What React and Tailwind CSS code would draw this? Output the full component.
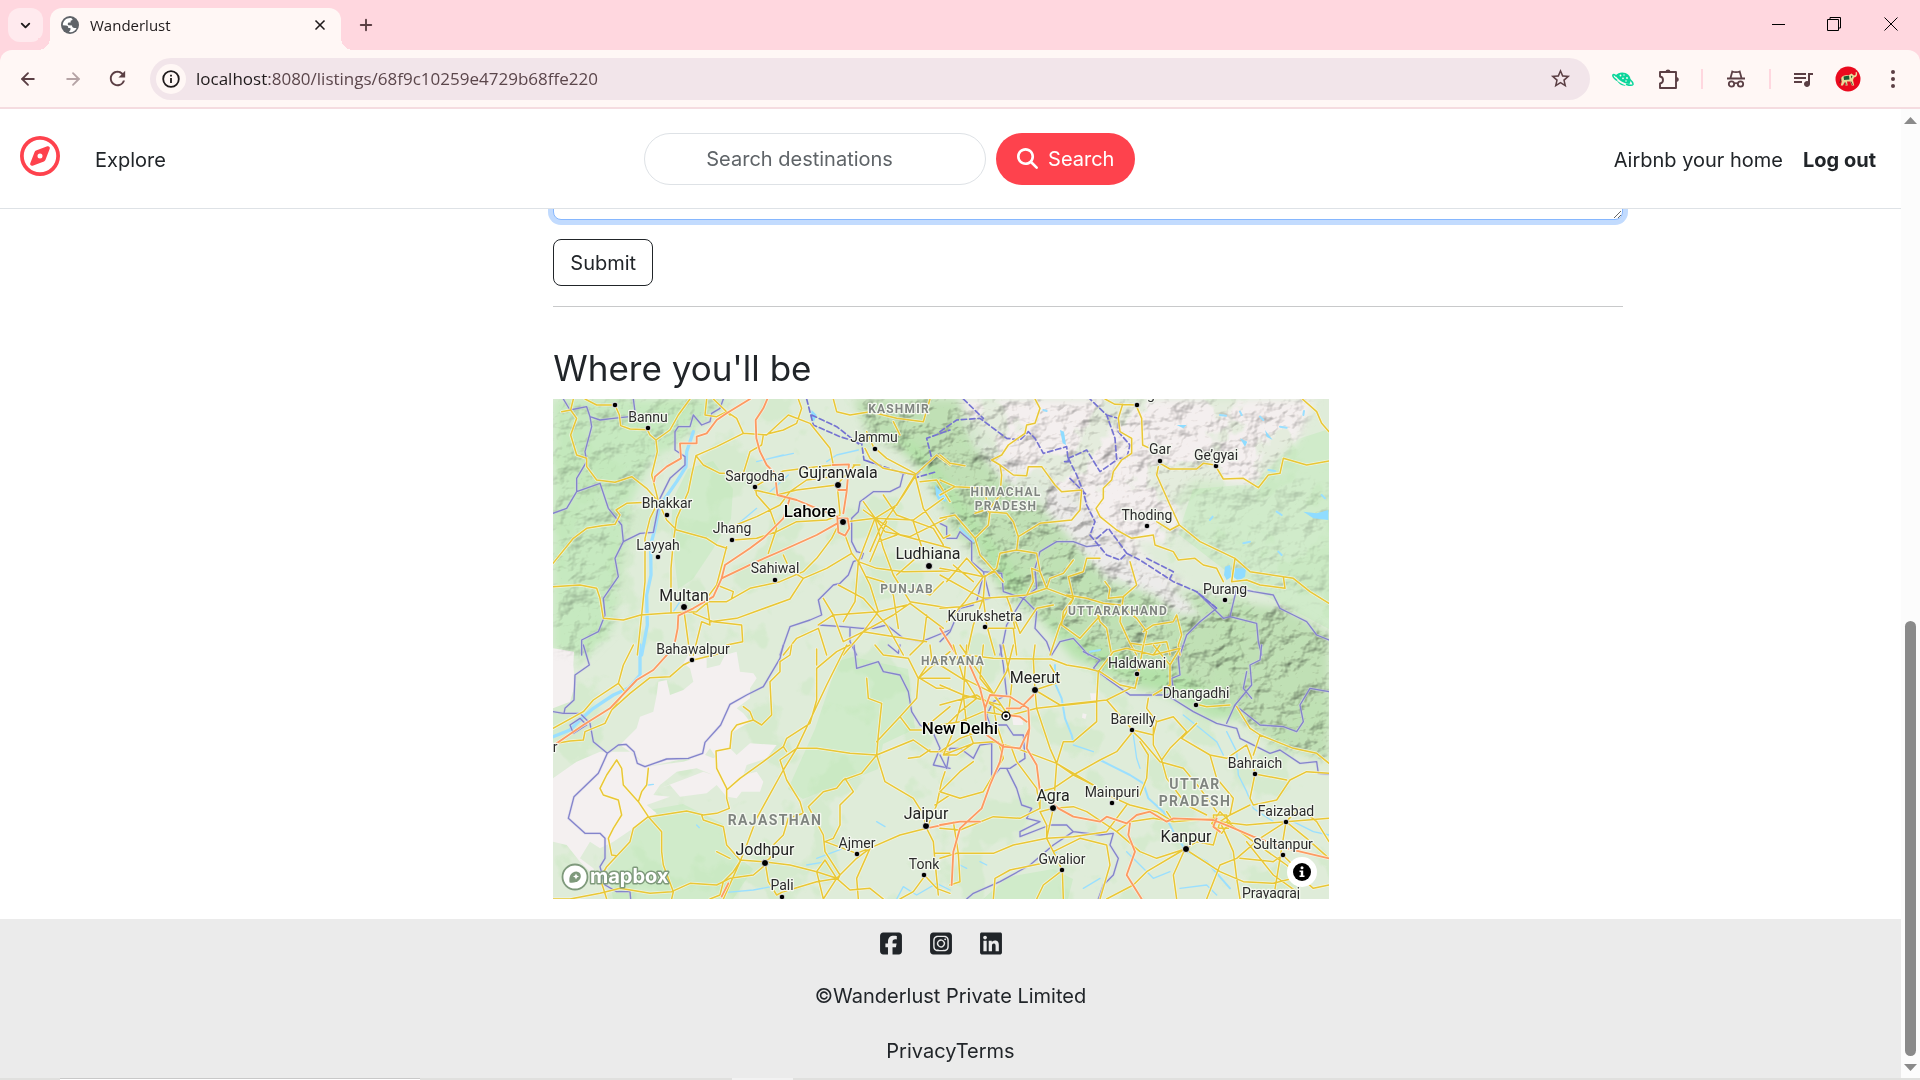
import React from "react";
import { ArrowLeft, ArrowRight, ChevronDown, Plus, X } from "lucide-react";
import { FaRegCompass, FaMagnifyingGlass, FaSquareFacebook, FaSquareInstagram, FaLinkedin } from "react-icons/fa6";
import { MdStarBorder, MdRefresh, MdOutlineQueueMusic } from "react-icons/md";

/* ---------- browser icons ---------- */

function GlobeIcon() {
  return (
    <svg viewBox="0 0 20 20" className="size-[18px] shrink-0" aria-hidden="true">
      <circle cx="10" cy="10" r="10" fill="#5f6368" />
      <path d="M11 2.300C6.500 1.800 2 5 2 10.300L5.500 10.500C7.500 10.500 8.300 11.500 8 13.200L10.500 13.300V15.500L8.800 17.900C13 18.500 16 16.500 17.300 13.300L14.500 13.200C12.500 13 12.300 11.800 12.300 10.600L8.300 10.400C7.200 9.800 7.200 8 8.400 7.300L10.700 7.200V5.300L12.800 4.400C12.800 3.300 12 2.500 11 2.300Z" fill="#fff" />
    </svg>
  );
}

function InfoIcon() {
  return (
    <svg viewBox="0 0 18 18" className="size-[18px]" fill="none" stroke="currentColor" strokeWidth="1.800" aria-hidden="true">
      <circle cx="9" cy="9" r="7.800" />
      <path d="M9 8V13M9 4.800V6.600" />
    </svg>
  );
}

function PlanetIcon() {
  return (
    <svg viewBox="0 0 22 18" className="h-[18px] w-[22px]" aria-hidden="true">
      <path d="M4.500 6.500C3 4.500 1.500 4.300 1 5 .3 6.300 2.500 8.500 5 10.500M18 9.500C20.200 11.500 21.400 13.500 20.800 14.600 20 15.800 17 15.300 14 14.200" fill="none" stroke="#0bd69b" strokeWidth="1.600" />
      <path d="M3.500 5.500C6 2.500 10 1.700 13.500 3 17.500 4.500 19 8 18.500 11.500L17.500 14C12.500 13.500 6 10.500 3.500 5.500Z" fill="#0bd69b" />
      <path d="M4.500 9.800C6 13.500 10 16.200 14 15.600 10.500 14.500 7 12.500 4.500 9.800Z" fill="#0bd69b" />
      <g fill="#fff7f5"><circle cx="8.500" cy="5.500" r=".9" /><circle cx="12" cy="5" r=".7" /><circle cx="11" cy="8.300" r=".9" /><circle cx="15" cy="8" r=".9" /><circle cx="14" cy="11" r=".8" /></g>
    </svg>
  );
}

function PuzzleIcon() {
  return (
    <svg viewBox="0 0 22 22" className="size-[22px]" aria-hidden="true">
      <path d="M2 4H18V20H2V15.500C6 15 6 9 2 8.500Z" fill="none" stroke="#5b3f44" strokeWidth="1.900" strokeLinejoin="round" />
      <path d="M7.500 4C7.500 .7 12.500 .7 12.500 4ZM18 9C21.700 9 21.700 14 18 14Z" fill="#5b3f44" />
    </svg>
  );
}

function IncognitoIcon() {
  return (
    <svg viewBox="0 0 20 20" className="size-5" fill="none" stroke="#5b3f44" strokeWidth="1.800" aria-hidden="true">
      <path d="M1 9.500H19M4.500 9 6.300 2.500C8 3.300 12 3.300 13.700 2.500L15.500 9" />
      <circle cx="5.500" cy="15" r="2.700" />
      <circle cx="14.500" cy="15" r="2.700" />
      <path d="M8.200 14.700C9 14 11 14 11.800 14.700" />
    </svg>
  );
}

function ElephantAvatar() {
  return (
    <svg viewBox="0 0 26 26" className="size-[26px]" aria-hidden="true">
      <circle cx="13" cy="13" r="12.500" fill="#ea0a1e" />
      <path d="M6 12.500C7 9.500 10 8.800 14 9L16.500 7.500 19 9.500C20.500 9.500 21 8.500 20.500 6.500L21.800 6C22.800 9 21.500 11.300 19 11.500L18 14 19.200 19.500H16.800L15.200 15.500H12L12.700 19.500H10.500L9.500 16 8 19.500H5.800L6.800 15.500Z" fill="#eadb9a" />
      <path d="M8.500 10.500 14 9.500 14.500 13.500 9 14ZM16 9.500 17.500 10.500 16.200 12.500Z" fill="#155c34" />
      <path d="M6 12.500 4.800 17M10.500 16.500 11 19M16 15.500 17.500 19" stroke="#3a3020" strokeWidth=".8" fill="none" />
    </svg>
  );
}

function IconButton({ label, className, children }) {
  return (
    <button type="button" aria-label={label} className={"flex items-center justify-center shrink-0 " + className}>
      {children}
    </button>
  );
}

function TabStrip() {
  return (
    <div className="flex h-[50px] items-start bg-[#ffd7df] pl-2 pt-2">
      <IconButton label="Search tabs" className="h-[34px] w-[35px] rounded-xl bg-[#ffeaee] text-[#1f1a1b]">
        <ChevronDown size={15} strokeWidth={3} />
      </IconButton>
      <div className="relative ml-[7px] flex h-[42px] w-[291px] items-center rounded-t-xl bg-[#fff7f5] pl-[11px] pr-[11px] pb-2">
        <span className="absolute -left-3 bottom-0 size-3 bg-[radial-gradient(circle_at_0_0,#ffd7df_12px,#fff7f5_12px)]" />
        <span className="absolute -right-3 bottom-0 size-3 bg-[radial-gradient(circle_at_100%_0,#ffd7df_12px,#fff7f5_12px)]" />
        <GlobeIcon />
        <span className="ml-[11px] grow text-[15px] text-[#1f1a1b]">Wanderlust</span>
        <IconButton label="Close tab" className="size-5 text-[#1f1a1b]">
          <X size={16} strokeWidth={2.500} />
        </IconButton>
      </div>
      <IconButton label="New tab" className="ml-3 size-[26px] mt-1 text-[#5b3f44]">
        <Plus size={18} strokeWidth={2.500} />
      </IconButton>
      <div className="ml-auto flex text-black">
        <IconButton label="Minimize" className="h-8 w-14">
          <svg viewBox="0 0 13 13" className="size-[13px]" stroke="currentColor"><path d="M0 6.500H13" /></svg>
        </IconButton>
        <IconButton label="Restore" className="h-8 w-14">
          <svg viewBox="0 0 14 14" className="size-[14px]" fill="none" stroke="currentColor"><path d="M.5 2.500H11.500V13.500H.5ZM3 2.500V.5H13.500V11H11.500" /></svg>
        </IconButton>
        <IconButton label="Close window" className="h-8 w-[58px]">
          <svg viewBox="0 0 14 14" className="size-[14px]" stroke="currentColor"><path d="M.5 .5 13.500 13.500M13.500 .5 .5 13.500" /></svg>
        </IconButton>
      </div>
    </div>
  );
}

function Toolbar() {
  return (
    <div className="bg-[#ffd7df]">
      <div className="flex h-[59px] items-center rounded-t-xl border-b-2 border-[#f5dce0] bg-[#fff7f5] pl-[5px] pr-1 text-[#5b3f44]">
        <IconButton label="Back" className="w-[45px]"><ArrowLeft size={20} strokeWidth={2.200} /></IconButton>
        <IconButton label="Forward" className="w-[45px] text-[#b5a3a5]"><ArrowRight size={20} strokeWidth={2.200} /></IconButton>
        <IconButton label="Reload" className="w-[45px]"><MdRefresh size={23} /></IconButton>
        <div className="ml-2.5 flex h-[42px] min-w-0 grow items-center rounded-full bg-[#f2e5ea] pl-1.5 pr-[18px]">
          <IconButton label="View site information" className="size-[30px] rounded-full bg-[#fff7f5] text-[#1f1a1b]">
            <InfoIcon />
          </IconButton>
          <div className="ml-2.5 grow text-[17px] text-[#5b464b]"><span className="text-[#1f1a1b]">localhost</span>:8080/listings/68f9c10259e4729b68ffe220</div>
          <IconButton label="Bookmark this page" className="size-6"><MdStarBorder size={23} /></IconButton>
        </div>
        <IconButton label="Planet extension" className="ml-2.5 w-[46px]"><PlanetIcon /></IconButton>
        <IconButton label="Extensions" className="w-[46px]"><PuzzleIcon /></IconButton>
        <span className="mx-[9px] h-5 w-0.5 bg-[#ffd7df]" />
        <IconButton label="Incognito" className="w-12"><IncognitoIcon /></IconButton>
        <span className="mx-[9px] h-5 w-0.5 bg-[#ffd7df]" />
        <IconButton label="Media controls" className="w-[46px]"><MdOutlineQueueMusic size={24} /></IconButton>
        <IconButton label="Profile" className="w-11"><ElephantAvatar /></IconButton>
        <IconButton label="Menu" className="w-[46px]">
          <svg viewBox="0 0 4 18" className="h-[18px] w-1" fill="currentColor"><circle cx="2" cy="2" r="2" /><circle cx="2" cy="9" r="2" /><circle cx="2" cy="16" r="2" /></svg>
        </IconButton>
      </div>
    </div>
  );
}

/* ---------- map ---------- */

const TILES = [
  {
    origin: "translate(-3 -4) scale(.33333)",
    minor: [
      "M70 12 62 45 35 50M62 45 80 70 62 120 80 180 110 190 110 215 140 255 195 262 245 245 290 280 325 320",
      "M105 12 140 30 195 30 208 60 212 92 240 102 292 104 300 120 318 135 322 170 305 240 318 290 325 320 300 370 285 430 285 560 275 660 262 780",
      "M420 12 385 60 360 105 318 135",
      "M9 505 70 430 110 400 155 392 195 388 210 360 198 345 230 325 325 320",
      "M9 575 90 570 140 580 150 610 160 670 220 675 272 660 345 655 440 650 475 620 530 620 600 580 690 560 760 530 800 490 845 430 860 400",
      "M325 320 350 375 380 405 470 430 500 450 530 460",
      "M548 435 620 430 680 410 740 380 830 375 870 360",
      "M438 182 425 240 415 290 380 370 370 440 363 520 363 655",
      "M438 182 500 155 580 115 650 120 715 60 780 85 840 160 850 210 800 215 700 228 640 260 615 275 620 300 660 345 680 400 655 475",
      "M438 182 460 210 510 235 580 235 600 170 635 150 640 120 700 105 740 85 755 40 745 12",
      "M470 12 465 60 500 65 530 50 560 70 580 115M490 12 540 60",
      "M614 285 680 300 740 285 860 270 915 210M558 390 620 365 690 330 720 290 770 255 850 245",
      "M530 455 500 570 470 610 480 690M500 570 550 590 545 610M403 655 420 780M430 655 490 680 575 690 578 740 530 750",
      "M482 680 560 670 720 612 760 550 720 525 700 480M760 550 830 520 905 475",
      "M480 690 455 680 440 740 430 780M862 275 870 355M910 210 930 210",
      "M885 420 905 475 925 500 915 620 880 680M890 380 975 370 1090 375 1180 310M975 370 940 345M975 370 925 500 980 520 1060 530 1200 528M975 370 1040 330 1095 240",
      "M1095 240 1110 300 1120 340 1180 430 1200 420M1095 240 1000 220 960 190 945 160M1095 240 1160 180 1200 210M975 370 1050 420 1200 460M975 370 1000 460 1030 540 1080 620 1200 640M925 500 960 570 985 650 1070 630",
      "M805 690 850 660 985 650 940 710 880 780M865 570 940 610 1010 690 1060 780M940 710 1030 660 1080 625 1180 700M820 610 850 660 880 740 940 710 1000 720 1130 740",
      "M850 12 860 50 900 60 960 50 1040 70 1120 80 1140 12M950 110 970 155 1010 190 1095 235M1030 80 1050 120M1130 660 1120 740 1080 780M1040 540 1120 470 1090 380M985 440 1040 420M960 500 1010 380M1110 260 1160 255 1200 320",
      "M940 320 1005 410 1080 425 1190 370M1000 300 1040 360 1150 400 1180 450M950 545 1000 560 1030 600 1045 700M1095 245 1060 300 990 400 960 470M700 780 740 730 805 700 830 780M1090 580 1140 600 1180 560",
    ],
    major: [
      "M600 12 530 55 500 75 470 115 440 125 440 145 390 145 393 190 350 215 315 245 312 260",
      "M652 12 640 40 617 75 619 130 630 170 650 210 675 235 682 300 740 315 800 340 862 365",
      "M862 385 800 420 700 465 620 500 515 550 490 605 430 640 385 662 383 700 375 740",
      "M718 315 700 370 640 430 600 460 525 510 515 550",
      "M848 210 897 208 890 290 880 355M865 285H890M862 370 865 412 885 422 898 400 893 370Z",
    ],
    border: [
      "M40 12 60 45 110 35 120 65 150 75 190 70 240 65 255 50 250 12M120 65 125 95 105 170 110 200 80 250 80 290 50 340 9 355",
      "M80 290 150 265 165 310 175 340 215 390 220 440 270 415 310 412 330 310 360 250 405 210 405 185 375 165 375 110 385 95 420 95 430 60 455 90 480 80 485 55 510 40 520 12",
      "M220 440 195 490 205 545 160 610 165 660 145 710 95 735 95 780",
      "M1060 235 1050 275 1020 290 970 290 930 320 925 350 905 370 905 440 920 470 940 475 935 490 910 500 895 540 870 565 850 570 805 615 815 660 780 675 720 695 690 780",
      "M805 690 880 695 935 700 970 700 1010 690 1060 730 1115 740 1200 705M900 700 900 740 920 780",
    ],
    disputed: ["M770 12 790 90 870 125 935 145 942 195 1060 235 1100 240 1145 190 1130 130 1200 105M942 195 990 210M785 60 860 95 930 150M1090 250 1160 230"],
    water: ["M430 110 410 170 408 215 380 260 345 310 325 350 315 400 302 450 303 540 290 600 292 690 275 780", "M700 180 620 200M730 175 660 190M925 165 860 180 830 200M715 240 660 290M620 340 560 390M390 620 370 650"],
    lakes: ["M1155 270 1175 290 1190 320 1165 315 1158 300ZM785 45 800 60 792 80 782 65Z"],
  },
  {
    origin: "translate(387 -4) scale(.33333)",
    minor: [
      "M285 12 300 40 285 85 260 90 255 115 205 150 185 180 155 195 180 210 185 240 180 300 150 340 105 355M180 210 220 240 260 242 265 215 305 215 345 270 365 290 425 285 420 345 395 375 300 385 235 425 220 380 200 355 145 350",
      "M495 12 525 28 590 30M548 28 535 70 540 110 575 130 575 175 545 195 520 230 515 255 490 280 490 310 468 340 480 365 530 405 575 430 640 420 645 450 700 470 715 495 765 490 790 510 830 520 850 560",
      "M590 35 605 70 608 150 625 158M660 205 690 222 770 222 790 205 825 210 850 252 910 250 955 278 985 240 1020 235 1030 190 1100 210 1167 198M1087 12 1130 50 1145 85 1167 110",
      "M655 215 650 240 690 330 718 390 780 440 885 490 930 530 1060 550 1110 590 1167 625M718 390 690 405 650 380M885 490 875 560 920 555 960 570 1035 580 1030 545",
      "M0 180 30 205 75 212M0 255 45 275 130 280 150 350 145 390 105 430M0 300 45 275M0 370 45 360 105 430 120 480 165 530 190 560",
      "M220 380 235 425 230 465 180 475 170 520 135 545 130 610 140 690 165 780M230 465 290 475 300 530 320 580 400 610 360 690 330 780",
      "M320 580 330 550 370 535 400 495M400 610 385 545 430 530 440 490 480 490M380 600 440 610 490 625 540 630 590 670 620 710 610 750 570 745",
      "M570 500 590 570 550 605 540 680 570 745 590 780M495 560 510 580 505 610 550 605M400 610 370 650 365 690 420 730 500 640M470 650 480 680 500 700 515 780",
      "M610 750 680 740 690 780M610 710 640 690 700 680 710 660 725 720 715 750 720 780",
      "M0 520 60 530 130 545 165 530M0 540 90 590 130 610 200 605 260 600 320 580M0 640 60 635 130 615M80 490 130 545 75 620 20 680M80 490 20 560M100 560 40 510M130 610 100 690 80 780M135 700 220 700 230 780M200 605 240 715 290 640 340 630M210 630 225 700M260 600 280 560 275 520 300 530",
    ],
    major: ["M0 700 50 780"],
    border: [
      "M0 385 20 395 20 430 50 430 60 410 95 440 95 500 130 530 150 610 110 620 130 540",
      "M130 530 185 535 190 590 250 610 290 580 285 520 300 470 350 440 400 440 440 455 480 450",
      "M250 610 200 690 190 740 180 780M250 610 290 650 285 700 320 740 335 780 360 740 400 730 445 780M100 630 60 640 30 710 0 740",
      "M720 780 740 720 780 680 830 640 770 590 850 670 870 665 890 580 940 590 1000 600 1020 640 1060 660 1100 680 1130 720 1167 735M870 665 950 685 955 740 965 780",
    ],
    disputed: [
      "M0 110 50 75 120 70 200 130 240 135 265 110 285 130 310 175 380 155 385 200 370 200M70 12 130 70M385 190 440 165 480 230 530 195 525 130 500 60 450 12M500 60 535 70 535 110 570 150 560 190 530 190",
      "M385 190 410 240 430 290 440 330 465 380 450 420 500 480 540 495 560 475 600 495 700 560 770 590 830 640M390 250 440 300M470 430 505 400 535 440 560 475M620 490 700 530 690 550",
    ],
    water: ["M60 400 100 440M0 290 20 310M310 45 320 48M840 60 858 62M900 50 905 60M960 65 970 75M1020 95 1040 98M1010 350 1025 360M1015 470 1025 480M1090 60 1092 48M985 225 1005 228M1145 300 1155 310M910 445 930 440M810 375 818 365M450 770 480 765"],
    lakes: ["M360 105 372 110 378 150 368 145ZM855 515 870 510 875 545 860 555 852 540ZM885 520 918 520 915 545 895 558 880 545ZM975 105 998 135 980 125ZM900 130 922 140 915 155ZM1090 350 1130 355 1165 345 1165 375 1120 370ZM710 90 740 90 730 100Z"],
  },
  {
    origin: "translate(-3 246) scale(.33333)",
    minor: [
      "M250 0 220 60 205 115 130 165 100 200 9 250M205 115 225 140 185 195 165 235 105 260 100 285 60 288 20 295",
      "M530 20 430 45 400 60 360 95 300 98 240 145 185 195",
      "M725 0 720 30 690 50 690 80 660 110 665 210 635 240 610 225 560 240 545 260 540 310 498 318 500 370 530 430 530 460 538 490 500 505 460 510 410 498 300 515",
      "M580 185 600 200 610 225M200 345 215 370 220 420 265 470 295 515 335 560 335 620 340 660 370 740 365 762M295 370 290 420 275 440 265 470",
      "M200 345 170 390 150 430 160 450 205 465 215 510 190 550 175 580 185 630 200 632M295 515 250 550 240 590 170 665 150 700 160 730 170 762",
      "M530 435 570 400 640 350 700 305 710 280 780 235 800 165 800 70 860 20 900 0M800 12 800 60M890 0 830 120 740 310 700 375 620 520 590 600 570 650 520 762",
      "M740 310 800 310 900 325 980 330 1090 285 1140 320 1200 320M700 375 690 345 740 310M700 375 710 405 750 470 760 505 715 520 700 570 670 600 660 640 645 650",
      "M950 100 955 160 995 175 985 270 980 330 1005 410 1090 460 1115 500 1130 545M980 330 935 385 880 405 860 430 820 440 775 485 820 570 825 620 870 690 865 700",
      "M885 400 910 440 870 480 870 540 850 580 825 590 920 625 970 605 1050 570 1130 550M980 290 1050 215 1100 160 1105 100 1075 40 1000 30 975 0M1050 215 1080 255 1115 255 1200 185",
      "M1130 550 1160 480 1175 410 1185 380M1155 480 1200 450M1130 550 1150 590 1155 650 1165 750M1123 690 1160 730 1200 745M1155 625 1200 625M1123 695 1090 740 1050 762",
      "M455 510 460 525 520 545 530 600 570 645 640 650 720 660 800 680 860 700 920 640 960 610M570 650 550 680 520 710 510 750 480 762M645 650 655 710 680 750 700 740 800 710 865 700",
      "M9 762 60 762 150 745 210 730 300 745 365 740 420 715 500 720 540 700 610 690 640 665M800 680 825 645 860 700 900 735 960 730 1000 762M860 700 820 762M800 680 820 762M1105 100 1200 100M1105 100 1145 40 1140 0M1105 100 1145 65 1200 20M1110 100 1160 130 1200 130",
      "M925 762 920 700 960 610M700 305 710 320M1075 340 1110 335 1140 315M500 620 540 640",
    ],
    major: ["M355 25 310 75 260 105 180 190 100 240 20 295", "M1140 548 1200 535", "M535 715 515 755"],
    border: [
      "M700 0 690 40 640 125 590 150 540 178 512 240 465 292 458 325 415 340 350 342 285 365 262 355 252 320 228 298 205 300 172 325 145 385 72 455 55 520 105 565 150 565 165 580 165 640 150 665 165 720 200 740 240 740 242 762",
      "M172 325 130 290 120 235 90 205 40 205 9 200M100 0 118 60 75 90 72 165 45 190 42 205M60 240 90 220 110 240 70 265Z",
      "M912 0 920 70 985 50 1000 80 1050 90 1075 140 1085 200 1110 240 1150 265 1170 310 1150 360 1200 370M1015 0 1045 25 1050 0",
    ],
    disputed: [],
    water: ["M270 0 270 90 235 130 190 150 130 190 90 225 60 255 9 275", "M770 660 830 650M530 742 610 735 690 720M800 640 880 610M1040 762 1060 725 1100 750 1160 715 1200 735M980 530 1005 545M295 420 310 418M440 540 448 548"],
    wasteland: ["M9 10 72 20 70 60 75 120 60 170 9 190ZM420 20 470 40 470 70 510 60 525 30 560 20 570 80 610 85 620 100 600 130 600 160 560 190 580 205 600 230 550 260 540 310 500 340 480 310 465 330 440 350 410 340 290 365 255 330 210 300 260 250 270 215 310 200 320 150 325 110 350 105 360 150 400 135 430 110 420 70 400 55Z M9 400 80 350 150 320 240 320 290 365 400 350 465 330 490 340 540 310 560 330 600 295 680 300 650 340 590 360 580 390 620 380 640 410 630 440 575 440 560 460 530 455 500 420 470 445 390 455 360 420 330 430 410 400 460 380 490 390 440 370 380 380 330 420 310 450 360 455 290 480 320 505 250 550 190 590 150 610 120 590 90 640 130 670 140 700 90 650 50 600 9 590Z"],
  },
  {
    origin: "translate(387 246) scale(.33333)",
    minor: [
      "M0 50 80 30 160 40 280 42 333 42 380 60 440 70 480 80 540 120 585 130 595 90M285 135 280 42 285 0M285 135 360 110 330 60M285 135 360 180 500 165 570 130M285 135 290 190 330 310 350 355 340 490 320 580",
      "M205 212 290 190 470 170 475 80 520 20M470 170 470 230 400 290 370 290 350 355M205 212 150 130 60 0M180 180 110 160 70 150 0 120M205 212 110 150 0 180M205 212 215 120 190 0M205 212 130 200 60 230 0 240",
      "M180 175 120 100 130 0M110 160 60 200 20 240M160 150 200 80 220 0M70 150 40 260 10 330 100 295 160 290 230 310M10 330 50 330 100 295M0 320 60 280 170 240M175 290 190 340 130 440 60 460 0 440",
      "M80 0 70 150 80 240 100 295M40 0 70 100 150 140M0 60 80 110 110 160M100 350 60 380 0 440M160 180 170 240 190 300",
      "M230 310 350 355 400 390 460 420 480 440 570 480 650 500 700 530 680 500M350 355 460 420M400 390 480 345 530 320 578 260 600 280 660 350 730 370 780 430 830 500",
      "M578 255 640 270 650 230 700 215 740 260 690 310 665 345M625 160 620 190 650 230M600 290 625 330 620 400 600 450M665 345 680 400 740 480 800 510M500 165 530 200 578 255M725 280 810 330 830 400 880 460 870 510M725 280 770 235",
      "M810 330 860 340 920 300 935 340 945 387 930 460 940 480 1010 465 1050 405 1100 380 1167 385M945 387 1040 405M870 180 800 185 770 178M890 185 930 250 960 270 1060 310 1130 325 1167 355M960 270 940 330",
      "M585 130 595 85 610 0M640 0 690 60 690 120 640 150M660 0 640 30 560 10 520 20M690 60 720 10 640 30M300 490 240 520 160 515 60 555 0 550M300 490 290 430 230 350 215 310M300 490 300 440 340 430 400 390",
      "M340 490 400 485 440 500 530 560 570 530 640 520 700 530 820 520M340 490 300 500 320 540 320 580 340 620 367 676 310 720 290 762M320 580 400 575 500 560 560 480M530 560 600 620 650 640 735 612",
      "M320 580 220 600 160 625 50 625 0 640M55 625 60 710 30 720M40 530 55 625M367 676 370 762M160 762 165 700 210 675 330 650M340 620 420 580 500 600 510 660 480 762M735 612 700 690 710 762M735 612 620 680 580 720 500 762M735 612 840 680 910 710 1000 715 1060 700",
      "M840 530 820 600 770 590 735 612M840 530 880 620 890 700 900 762M860 530 940 590 1040 660 1120 730 1167 720M840 530 920 540 1038 530 1167 520M840 530 870 510 930 480M1038 530 1020 640 1000 762M1038 530 960 580 890 640 840 660 800 762M1038 530 1100 580 1167 640M1038 530 1080 490 1130 530 1167 590",
      "M820 510 860 510 865 550 825 550ZM840 500 870 530 845 565 815 535ZM640 240 640 300 665 345M900 640 1000 650 1028 630 1100 700M920 590 1000 690 1070 740",
    ],
    major: [
      "M80 40 120 130 135 190 150 150 210 155 265 190 268 250 240 310 190 305 140 270 135 190M268 250 260 310 290 360 300 440 355 490 400 515 480 530 500 515 560 535 590 510 630 500 680 530 700 520 820 525 870 545 940 575 1040 610 1167 640",
      "M190 300 180 350 150 420 125 490 60 550 40 620 35 720M0 540 60 530 120 530M570 535 565 570 585 620 560 690 605 762M200 210 240 215 260 230M200 190 240 190 280 150M840 560 820 545 830 520",
    ],
    border: [
      "M180 0 190 60 200 150 160 170 140 210 150 240 200 240 220 270 250 270 255 340 210 370 180 370 155 400 155 295 120 300 100 340 60 310 30 310 20 370 0 330M200 370 230 430 245 480 275 490 260 520 300 530 240 560 240 575 330 540 380 540 400 560 480 570 520 565 510 600 535 640 520 690 490 720 475 762",
      "M400 560 340 600 270 660 180 710 100 745 80 762M430 20 480 45 460 70 500 100 570 150 640 150 680 150 760 200 830 235 890 250 900 280 990 325 1020 315 1080 355 1130 350 1135 385 1167 388",
      "M730 0 715 40 720 90 695 100 700 130 680 155M965 0 960 45 930 60 935 120 885 180 860 235M920 80 910 130 935 160M885 180 960 240 1030 245 1070 260 1090 230 1080 180 1110 130 1167 140",
    ],
    disputed: [],
    water: ["M345 60 345 115 365 160 375 220 395 270 400 290M480 345 530 370 570 390 610 415 625 460 670 500 700 560 740 620 800 650 870 730", "M730 210 780 250 830 290 850 330M860 260 890 320 895 390 920 440 940 490 1000 530M1060 530 1120 560 1167 570M580 270 590 340 600 370M320 650 350 620M430 730 480 700M560 620 640 700 690 680M720 730 800 720 830 750M60 660 80 670M120 650 140 660M400 300 460 320"],
    wasteland: ["M450 145 470 145 472 170 455 170ZM215 210 245 215 250 240 220 240ZM428 205 440 208 436 222 426 218Z"],
  },
];

const CITIES = [
  ["Bannu", 95, 23, 95, 29], ["Sargodha", 202, 82, 202, 88], ["Jammu", 321, 43, 322, 50],
  ["Bhakkar", 114, 109, 114, 116], ["Jhang", 179, 134, 179, 141], ["Layyah", 105, 151, 105, 158],
  ["Sahiwal", 222, 174, 222, 181], ["Bahawalpur", 140, 255, 139, 261], ["Kurukshetra", 432, 222, 432, 228],
  ["Gar", 607, 55, 607, 62], ["Ge’gyai", 663, 61, 663, 67], ["Thoding", 594, 121, 594, 127],
  ["Purang", 672, 195, 672, 201], ["Haldwani", 584, 269, 584, 275], ["Dhangadhi", 643, 299, 643, 306],
  ["Bareilly", 580, 325, 579, 331], ["Bahraich", 702, 369, 702, 375], ["Mainpuri", 559, 398, 559, 404],
  ["Faizabad", 733, 417, 733, 423], ["Sultanpur", 730, 450, 730, 456], ["Gwalior", 509, 465, 509, 471],
  ["Ajmer", 304, 449, 304, 455], ["Tonk", 371, 470, 371, 476], ["Pali", 229, 491, 229, 498],
];
const BIG_CITIES = [
  ["Gujranwala", 285, 79, 285, 86], ["Ludhiana", 375, 160, 376, 167], ["Multan", 131, 202, 131, 208],
  ["Meerut", 482, 284, 482, 291], ["Agra", 500, 402, 500, 409], ["Kanpur", 633, 443, 633, 450],
  ["Jaipur", 373, 420, 373, 427], ["Jodhpur", 212, 456, 212, 464],
];
const REGIONS = [
  ["KASHMIR", 346, 14], ["HIMACHAL", 453, 97], ["PRADESH", 453, 111], ["PUNJAB", 354, 194],
  ["UTTARAKHAND", 565, 216], ["HARYANA", 400, 266],
];
const LARGE_REGIONS = [["UTTAR", 642, 390], ["PRADESH", 642, 407], ["RAJASTHAN", 222, 426]];

const HIMALAYA = "M300 0H405L425 30 455 62 500 90 530 100 540 135 575 165 620 190 680 203 735 210 776 235V362L720 345 690 320 640 290 590 292 545 270 525 240 480 215 455 200 430 165 405 135 385 100 372 75 345 50 315 35Z";
const TIBET = "M395 0H762L745 40 715 70 700 85 640 80 620 100 628 125 615 145 580 140 600 165 640 190 600 180 550 150 530 110 490 95 440 65 415 35Z";
const SULEIMAN = "M0 0H180L140 30 125 45 100 60 80 100 70 150 60 230 30 260 0 250Z";
const FARMLAND = "M135 70 160 62 180 90 178 120 160 150 140 180 125 190 118 130 120 100ZM285 262 300 258 355 270 362 330 330 345 325 370 250 400 235 390 262 330ZM90 412 130 405 170 425 175 450 200 470 180 500H60L55 470 75 445ZM430 500 455 478 500 470 520 480 515 500ZM640 90 700 85 745 40 776 30V230L690 185 625 135Z";

function RouteMap() {
  return (
    <svg viewBox="0 0 776 500" className="block size-full" role="img" aria-label="Map of northern India">
      <defs>
        <filter id="relief" x="0" y="0" width="100%" height="100%" colorInterpolationFilters="sRGB">
          <feTurbulence type="fractalNoise" baseFrequency=".04 .05" numOctaves="4" seed="8" />
          <feDiffuseLighting surfaceScale="5" diffuseConstant="1.300" lightingColor="#fffdfb">
            <feDistantLight azimuth="225" elevation="52" />
          </feDiffuseLighting>
        </filter>
        <filter id="soft" x="-5%" y="-5%" width="110%" height="110%"><feGaussianBlur stdDeviation="4" /></filter>
        <filter id="patches" x="0" y="0" width="100%" height="100%" colorInterpolationFilters="sRGB">
          <feTurbulence type="fractalNoise" baseFrequency=".02" numOctaves="4" seed="3" />
          <feColorMatrix values="0 0 0 0 .74  0 0 0 0 .9  0 0 0 0 .7  14 0 0 0 -7.800" />
        </filter>
        <mask id="hills">
          <g filter="url(#soft)" fill="#fff">
            <path d={HIMALAYA} /><path d={TIBET} opacity=".75" /><path d={SULEIMAN} opacity=".5" />
            <path d="M640 80H776V210L690 180 620 130Z" opacity=".4" />
          </g>
        </mask>
      </defs>
      <rect width="776" height="500" fill="#dfecd9" />
      <path d={FARMLAND} fill="#d0ebca" />
      <g filter="url(#soft)">
        <path d={SULEIMAN} fill="#c6e9c0" />
        <path d={TIBET} fill="#f4efef" />
        <path d={HIMALAYA} fill="#c0e0b5" />
        <path d="M405 10 425 50 450 80 480 100 510 130 540 165 560 185 600 195 625 215 650 215 620 190 600 165 560 140 530 105 490 80 440 50Z" fill="#ecebea" />
        <path d="M330 25 360 60 400 110 430 150 450 190 480 205 470 180 430 130 400 90 370 50ZM480 210 550 250 640 280 690 320 660 320 600 290 520 260Z" fill="#b0e2a6" opacity=".8" />
      </g>
      <rect width="776" height="500" filter="url(#patches)" opacity=".28" />
      {TILES.map((t, i) => t.wasteland && <path key={i} d={t.wasteland[0]} transform={t.origin} fill="#f4f0f0" />)}
      <g mask="url(#hills)" className="mix-blend-multiply"><rect width="776" height="500" filter="url(#relief)" opacity=".6" /></g>
      <g fill="none" strokeLinejoin="round" strokeLinecap="round">
        {TILES.map((t, i) => (
          <g key={i} transform={t.origin}>
            <path d={t.water[0]} stroke="#9adfff" strokeWidth={i < 1 || i === 2 ? 10 : 6} />
            {t.water[1] && <path d={t.water[1]} stroke="#9adfff" strokeWidth="4" />}
            {t.lakes && <path d={t.lakes[0]} fill="#8fdcff" />}
            <path d={t.border.join("")} stroke="#d3d0ea" strokeWidth="8" opacity=".5" />
            <path d={t.border.join("")} stroke="#8384cb" strokeWidth="4" />
            <path d={t.disputed.join("")} stroke="#7573d2" strokeWidth="5" strokeDasharray="16 9" />
          </g>
        ))}
        {TILES.map((t, i) => (
          <g key={i} transform={t.origin}>
            <path d={t.minor.join("")} stroke="#fbf8e6" strokeWidth="9" opacity=".7" />
            <path d={t.minor.join("")} stroke="#e9c735" strokeWidth="4.500" />
            <path d={t.major.join("")} stroke="#fff3e6" strokeWidth="10" opacity=".7" />
            <path d={t.major.join("")} stroke="#fd9a62" strokeWidth="5.500" />
          </g>
        ))}
      </g>
      <g fill="#000" stroke="#fff" strokeWidth=".8">
        {CITIES.map(([n, , , x, y]) => <circle key={n} cx={x} cy={y} r="2.800" />)}
        {BIG_CITIES.map(([n, , , x, y]) => <circle key={n} cx={x} cy={y} r="3.500" />)}
        <circle cx="290" cy="123" r="3.500" /><circle cx="62" cy="6" r="2.800" /><circle cx="584" cy="6" r="2.800" />
      </g>
      <circle cx="453" cy="317" r="4" fill="#fff" stroke="#000" strokeWidth="1.300" /><circle cx="453" cy="317" r="1.800" />
      <g textAnchor="middle" stroke="#f4f8f0" strokeWidth="2.500" strokeLinejoin="round" paintOrder="stroke" className="font-['Roboto',sans-serif] font-normal">
        <g fill="#808580" className="text-[12px] font-bold tracking-widest">
          {REGIONS.map(([n, x, y]) => <text key={n + y} x={x} y={y}>{n}</text>)}
        </g>
        <g fill="#808580" className="text-[14px] font-bold tracking-widest">
          {LARGE_REGIONS.map(([n, x, y]) => <text key={n} x={x} y={y}>{n}</text>)}
        </g>
        <g fill="#2b2b2b" className="text-[14px]">
          {CITIES.map(([n, x, y]) => <text key={n} x={x} y={y}>{n}</text>)}
          <text x="718" y="499">Prayagraj</text><text x="2" y="353">r</text><text x="598" y="0">g</text>
        </g>
        <g fill="#222" className="text-[16px]">
          {BIG_CITIES.map(([n, x, y]) => <text key={n} x={x} y={y}>{n}</text>)}
        </g>
        <g fill="#000" className="text-[17px] font-medium">
          <text x="257" y="118">Lahore</text><text x="407" y="335">New Delhi</text>
        </g>
      </g>
    </svg>
  );
}

function MapPanel() {
  return (
    <div className="relative h-[500px] w-[776px] max-w-full overflow-hidden">
      <RouteMap />
      <a href="#mapbox" className="absolute bottom-2 left-2 flex items-center">
        <svg viewBox="0 0 28 28" className="size-7" aria-hidden="true">
          <circle cx="14" cy="14" r="12.500" fill="#fff" stroke="#7f9a7c" strokeWidth="1.800" />
          <path d="M8.500 19.500C7.500 13.500 10 8.500 15.500 8.500 20 9 21 14 18.300 17 16 19.500 12 20 8.500 19.500Z" fill="#7f9a7c" />
          <path d="M15 10.500 15.900 12.600 18 13.500 15.900 14.400 15 16.500 14.100 14.400 12 13.500 14.100 12.600Z" fill="#fff" />
        </svg>
        <svg viewBox="0 0 82 26" className="h-[26px] w-[82px]" role="img" aria-label="Mapbox">
          <text x="1" y="19" fill="#fff" stroke="#7f9a7c" strokeWidth="3" strokeLinejoin="round" paintOrder="stroke" className="font-['Inter',sans-serif] text-[20px] font-bold">mapbox</text>
        </svg>
      </a>
      <button type="button" aria-label="Toggle attribution" className="absolute bottom-3 right-3 flex size-[30px] items-center justify-center rounded-full bg-white">
        <svg viewBox="0 0 18 18" className="size-[18px]"><circle cx="9" cy="9" r="9" /><circle cx="9" cy="4.800" r="1.500" fill="#fff" /><path d="M6.500 7.500H10.200V12.500H11.500V14H6.500V12.500H7.800V9H6.500Z" fill="#fff" /></svg>
      </button>
    </div>
  );
}

/* ---------- page ---------- */

function Navbar() {
  return (
    <nav className="relative z-10 flex h-[100px] items-center border-b border-[#dee2e6] bg-white pl-5 pr-[25px] text-[20px]">
      <a href="#home" aria-label="Wanderlust home" className="mb-1.5 text-[#fe424d]"><FaRegCompass size={40} /></a>
      <a href="#explore" className="ml-[35px] pt-0.5">Explore</a>
      <form className="mx-auto flex gap-2.5" onSubmit={(e) => e.preventDefault()}>
        <input type="search" aria-label="Search destinations" placeholder="Search destinations" className="h-[52px] w-[342px] rounded-full border border-[#dee2e6] px-[61px] outline-none placeholder:text-[#5f6468] placeholder:opacity-100" />
        <button type="submit" className="flex h-[52px] w-[139px] items-center justify-center gap-2.5 rounded-full bg-[#fe424d] text-white">
          <FaMagnifyingGlass size={21} />Search
        </button>
      </form>
      <a href="#host" className="pt-0.5">Airbnb your home</a>
      <a href="#logout" className="ml-5 pt-0.5 font-bold">Log out</a>
    </nav>
  );
}

function Footer() {
  return (
    <footer className="mt-5 flex h-[159px] flex-col items-center bg-[#ebebeb] pt-3 text-[20px]">
      <div className="flex gap-7 pr-5">
        <a href="#facebook" aria-label="Facebook"><FaSquareFacebook className="h-[25px] w-[22px]" /></a>
        <a href="#instagram" aria-label="Instagram"><FaSquareInstagram className="h-[25px] w-[22px]" /></a>
        <a href="#linkedin" aria-label="LinkedIn"><FaLinkedin className="h-[25px] w-[22px]" /></a>
      </div>
      <div className="mt-[25px] leading-[30px]">©Wanderlust Private Limited</div>
      <div className="mt-[25px] leading-[30px]"><a href="#privacy">Privacy</a><a href="#terms">Terms</a></div>
    </footer>
  );
}

function Scrollbar() {
  return (
    <div className="flex w-[19px] shrink-0 flex-col items-center bg-[#fcfcfc] pt-2 pb-[7px]">
      <svg viewBox="0 0 13 7" className="h-[7px] w-[13px]"><path d="M0 7 6.500 0 13 7Z" fill="#8a8a8a" /></svg>
      <div className="grow" />
      <div className="h-[435px] w-[11px] rounded-full bg-[#8a8a8a]" />
      <svg viewBox="0 0 13 7" className="mt-2 h-[7px] w-[13px]"><path d="M0 0 6.500 7 13 0Z" fill="#8a8a8a" /></svg>
    </div>
  );
}

export default function App() {
  return (
    <div className="flex min-h-screen flex-col overflow-hidden bg-white font-['Open_Sans',sans-serif]">
      <TabStrip />
      <Toolbar />
      <div className="flex grow font-['Inter',sans-serif] text-[#212529]">
        <div className="flex min-w-0 grow flex-col overflow-hidden">
          <Navbar />
          <main className="grid grid-cols-12 pr-[129px] pl-[131px]">
            <div className="col-span-8 col-start-4 px-3">
              <textarea aria-label="Comments" className="-mt-[90px] block h-[101px] w-full resize-y rounded-lg border border-[#86b7fe] bg-white shadow-[0_0_0_5px_#c2dbfe] outline-none" />
              <button type="submit" className="mt-[19px] h-[47px] w-[100px] rounded-lg border border-[#212529] text-[20px]">Submit</button>
              <hr className="mt-5 border-[#c8c9ca]" />
              <h3 className="mt-10 mb-2.5 text-[35px] leading-[42px]">Where you'll be</h3>
              <MapPanel />
            </div>
          </main>
          <Footer />
        </div>
        <Scrollbar />
      </div>
      <div className="flex h-0.5 bg-[#e0e0de]"><span className="ml-[60px] w-[360px] border-t border-[#c8c8c8] bg-white" /><span className="ml-[312px] w-[61px] bg-[#f2f2f2]" /></div>
    </div>
  );
}
